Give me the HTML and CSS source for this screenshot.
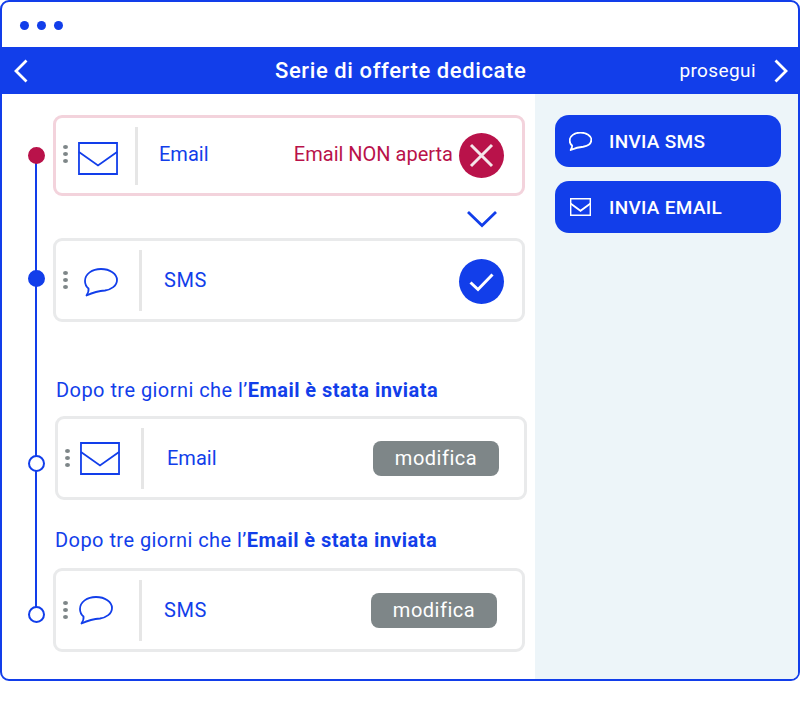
FILE: index.html
```html
<!DOCTYPE html>
<html lang="en">
<head>
<meta charset="UTF-8">
<meta name="viewport" content="width=device-width, initial-scale=1.0">
<title>Serie di offerte dedicate</title>
<link rel="stylesheet" href="styles.css">
</head>
<body>
<svg class="icon-defs" width="0" height="0">
  <symbol id="mail" viewBox="0 0 41 33" preserveAspectRatio="none">
    <rect x="1" y="1" width="39" height="31" fill="none" stroke="currentColor" stroke-width="1.8" vector-effect="non-scaling-stroke"/>
    <path d="M1 10 L20.5 23.5 L40 10" fill="none" stroke="currentColor" stroke-width="1.8" vector-effect="non-scaling-stroke"/>
  </symbol>
  <symbol id="bubble" viewBox="0 0 34 29" preserveAspectRatio="none">
    <path d="M2.5 27.5 C4 25 5 23 4.5 20.5 C2 18.5 1 16 1 13 C1 6 8 1 17 1 C26 1 33 6 33 12 C33 18 27 21.5 21 22.5 C14 23 8 25 2.5 27.5 Z" fill="none" stroke="currentColor" stroke-width="1.8" stroke-linejoin="round" vector-effect="non-scaling-stroke"/>
  </symbol>
</svg>

<div class="window">
  <div class="titlebar">
    <span class="dot"></span>
    <span class="dot"></span>
    <span class="dot"></span>
  </div>

  <div class="header">
    <svg class="chevron" width="14" height="24" viewBox="0 0 14 24"><path d="M12.5 1.5 L2 12 L12.5 22.5" fill="none" stroke="#fff" stroke-width="2.8"/></svg>
    <h1>Serie di offerte dedicate</h1>
    <div class="next">
      <span>prosegui</span>
      <svg class="chevron" width="14" height="24" viewBox="0 0 14 24"><path d="M1.5 1.5 L12 12 L1.5 22.5" fill="none" stroke="#fff" stroke-width="2.8"/></svg>
    </div>
  </div>

  <div class="content">
    <div class="flow">
      <div class="timeline">
        <span class="node node-red node-1"></span>
        <span class="node node-blue node-2"></span>
        <span class="node node-3"></span>
        <span class="node node-4"></span>
      </div>

      <div class="card card-failed">
        <div class="grip"><i></i><i></i><i></i></div>
        <svg class="icon-mail"><use href="#mail"/></svg>
        <div class="divider"></div>
        <span class="card-label">Email</span>
        <span class="status-text">Email NON aperta</span>
        <div class="status status-x">
          <svg width="45" height="45" viewBox="0 0 45 45"><path d="M12 12 L33 33 M33 12 L12 33" stroke="#f4e6ea" stroke-width="3"/></svg>
        </div>
      </div>

      <svg class="arrow-down" width="32" height="18" viewBox="0 0 32 18"><path d="M2 2 L16 15.5 L30 2" fill="none" stroke="#123eea" stroke-width="2.8"/></svg>

      <div class="card card-sms">
        <div class="grip"><i></i><i></i><i></i></div>
        <svg class="icon-bubble"><use href="#bubble"/></svg>
        <div class="divider"></div>
        <span class="card-label">SMS</span>
        <div class="status status-ok">
          <svg width="45" height="45" viewBox="0 0 45 45"><path d="M11.5 23.5 L19 30.5 L33.5 15.5" fill="none" stroke="#fff" stroke-width="3"/></svg>
        </div>
      </div>

      <p class="note note-1">Dopo tre giorni che l’<b>Email è stata inviata</b></p>

      <div class="card card-email-2">
        <div class="grip"><i></i><i></i><i></i></div>
        <svg class="icon-mail"><use href="#mail"/></svg>
        <div class="divider"></div>
        <span class="card-label">Email</span>
        <button class="edit-btn">modifica</button>
      </div>

      <p class="note note-2">Dopo tre giorni che l’<b>Email è stata inviata</b></p>

      <div class="card card-sms-2">
        <div class="grip"><i></i><i></i><i></i></div>
        <svg class="icon-bubble"><use href="#bubble"/></svg>
        <div class="divider"></div>
        <span class="card-label">SMS</span>
        <button class="edit-btn">modifica</button>
      </div>
    </div>

    <div class="side">
      <button class="send-btn">
        <svg class="send-bubble"><use href="#bubble"/></svg>
        INVIA SMS
      </button>
      <button class="send-btn">
        <svg class="send-mail"><use href="#mail"/></svg>
        INVIA EMAIL
      </button>
    </div>
  </div>
</div>
</body>
</html>
```

FILE: styles.css
```css
* {
  box-sizing: border-box;
}
body {
  margin: 0;
  font-family: Roboto, sans-serif;
  background-color: #fff;
  color: #123eea;
}
.icon-defs {
  position: absolute;
}
.window {
  width: 800px;
  height: 681px;
  border: 2px solid #123eea;
  border-radius: 9px;
  overflow: hidden;
  display: flex;
  flex-direction: column;
}
.titlebar {
  height: 45px;
  display: flex;
  align-items: center;
  gap: 8px;
  padding: 2px 0 0 18px;
}
.dot {
  width: 9px;
  height: 9px;
  border-radius: 50%;
  background-color: #123eea;
}
.header {
  height: 47px;
  background-color: #123eea;
  color: #fff;
  display: flex;
  align-items: center;
  justify-content: space-between;
  padding: 0 10px 0 12px;
  position: relative;
}
.header h1 {
  margin: 0;
  font-size: 22px;
  font-weight: 500;
  letter-spacing: 0.6px;
  position: absolute;
  left: 273px;
}
.next {
  display: flex;
  align-items: center;
  gap: 18px;
  font-size: 19px;
  letter-spacing: 0.4px;
}
.content {
  flex: 1;
  display: flex;
}
.flow {
  width: 533px;
  position: relative;
  padding: 21px 0 0 51px;
}
.timeline {
  position: absolute;
  left: 33px;
  top: 61px;
  width: 2px;
  height: 452px;
  background-color: #123eea;
}
.node {
  position: absolute;
  left: -7px;
  width: 17px;
  height: 17px;
  border-radius: 50%;
  background-color: #fff;
  border: 2px solid #123eea;
}
.node-red {
  background-color: #b9124a;
  border-color: #b9124a;
}
.node-blue {
  background-color: #123eea;
}
.node-1 { top: -8px; }
.node-2 { top: 115px; }
.node-3 { top: 300px; }
.node-4 { top: 451px; }
.card {
  width: 472px;
  height: 84px;
  border: 3px solid #e9eaeb;
  border-radius: 9px;
  background-color: #fff;
  display: flex;
  align-items: center;
  padding-right: 18px;
}
.card-failed {
  height: 81px;
  border-color: #f3d3dc;
}
.card-email-2 {
  margin-left: 2px;
}
.grip {
  display: flex;
  flex-direction: column;
  gap: 3px;
  margin-left: 7px;
  width: 5px;
}
.card-failed .grip {
  margin-top: -3px;
}
.grip i {
  width: 5px;
  height: 4px;
  border-radius: 50%;
  background-color: #7e8688;
}
.icon-mail {
  width: 40px;
  height: 33px;
  margin-left: 10px;
}
.card-failed .icon-mail {
  margin-top: 6px;
}
.icon-bubble {
  width: 34px;
  height: 29px;
  margin: 0 0 0 16px;
}
.card-sms .icon-bubble {
  margin-top: 4px;
}
.divider {
  width: 3px;
  align-self: center;
  height: 61px;
  background-color: #e6e6e6;
  margin-left: 21px;
}
.card-failed .divider {
  height: 58px;
  margin-left: 17px;
}
.card-sms-2 .icon-bubble {
  margin-left: 11px;
  margin-right: 5px;
}
.card-label {
  font-size: 20px;
  margin-left: 22px;
  flex: 1;
}
.card-sms .card-label,
.card-sms-2 .card-label {
  letter-spacing: 0.6px;
}
.card-failed .card-label {
  margin-left: 21px;
  margin-top: -3px;
}
.card-email-2 .card-label {
  margin-left: 23px;
}
.status-text {
  font-size: 20px;
  color: #b9124a;
  margin-right: 6px;
  margin-top: -3px;
}
.status {
  width: 45px;
  height: 45px;
  border-radius: 50%;
  display: flex;
}
.status-x {
  background-color: #b9124a;
}
.status-ok {
  background-color: #123eea;
  margin-top: 3px;
}
.arrow-down {
  display: block;
  margin: 14px 0 10px 413px;
}
.note {
  margin: 0;
  font-size: 20px;
  line-height: 24px;
  letter-spacing: 0.45px;
}
.note b {
  font-weight: 700;
}
.note-1 {
  margin: 56px 0 14px 3px;
}
.note-2 {
  margin: 28px 0 16px 2px;
}
.edit-btn {
  width: 126px;
  height: 35px;
  border: none;
  border-radius: 8px;
  background-color: #7e8688;
  color: #fff;
  font-family: inherit;
  font-size: 20px;
  letter-spacing: 0.5px;
  padding: 0;
  margin-right: 7px;
}
.side {
  flex: 1;
  background-color: #edf5f9;
  padding: 21px 17px 0 20px;
  display: flex;
  flex-direction: column;
  gap: 14px;
}
.send-btn {
  height: 52px;
  border: none;
  border-radius: 14px;
  background-color: #123eea;
  color: #fff;
  font-family: inherit;
  font-size: 19px;
  font-weight: 500;
  letter-spacing: 0.3px;
  display: flex;
  align-items: center;
  padding: 0 0 0 14px;
}
.send-bubble {
  width: 23px;
  height: 19px;
  margin-right: 17px;
}
.send-mail {
  width: 21px;
  height: 18px;
  margin: 0 18px 0 1px;
}
```
